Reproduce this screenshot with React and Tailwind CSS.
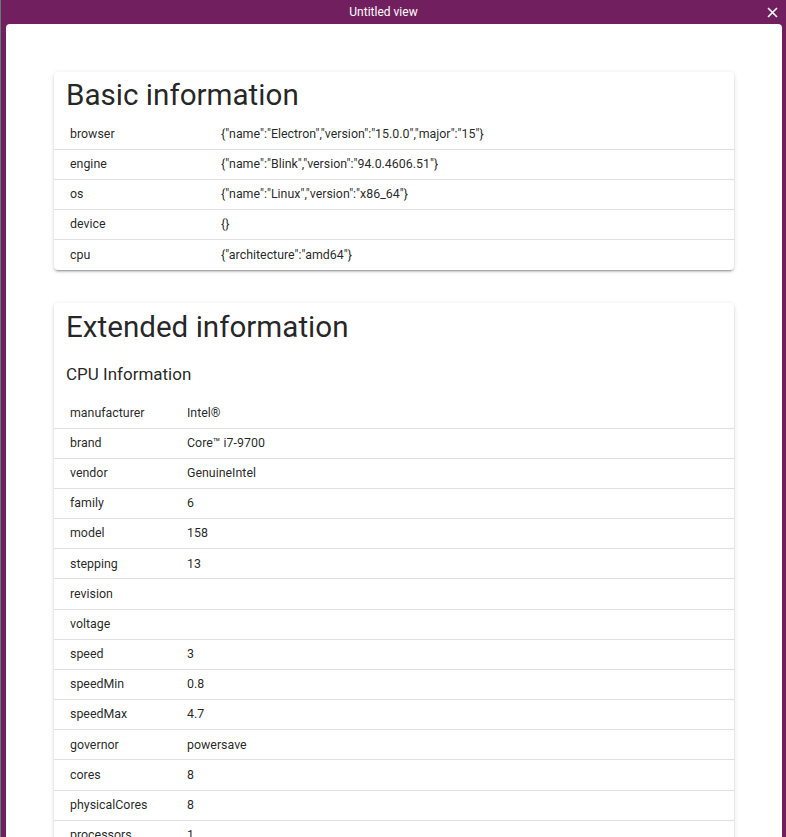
import React from 'react';

const basicInfo = [
  ['browser', '{"name":"Electron","version":"15.0.0","major":"15"}'],
  ['engine', '{"name":"Blink","version":"94.0.4606.51"}'],
  ['os', '{"name":"Linux","version":"x86_64"}'],
  ['device', '{}'],
  ['cpu', '{"architecture":"amd64"}'],
];

const cpuInfo = [
  ['manufacturer', 'Intel®'],
  ['brand', 'Core™ i7-9700'],
  ['vendor', 'GenuineIntel'],
  ['family', '6'],
  ['model', '158'],
  ['stepping', '13'],
  ['revision', ''],
  ['voltage', ''],
  ['speed', '3'],
  ['speedMin', '0.8'],
  ['speedMax', '4.7'],
  ['governor', 'powersave'],
  ['cores', '8'],
  ['physicalCores', '8'],
  ['processors', '1'],
  ['socket', ''],
  ['flags', 'fpu vme de pse tsc msr pae mce cx8'],
];

const InfoTable = ({ rows, labelWidth }) => (
  <div className="flex flex-col">
    {rows.map(([key, value], i) => (
      <div
        key={key}
        className={`flex items-center h-[30.18px] text-[12.4px] text-[rgba(0,0,0,0.87)] ${i < rows.length - 1 ? 'border-b border-[#e0e0e0]' : ''}`}
      >
        <div className={`${labelWidth} shrink-0 pl-4`}>{key}</div>
        <div className="flex-1 whitespace-nowrap">{value}</div>
      </div>
    ))}
  </div>
);

const Card = ({ children }) => (
  <div className="bg-white rounded-[4px] shadow-[0_3px_1px_-2px_rgba(0,0,0,0.2),0_2px_2px_0_rgba(0,0,0,0.14),0_1px_5px_0_rgba(0,0,0,0.12)]">
    {children}
  </div>
);

export default function App() {
  return (
    <div
      className="h-[837px] w-[786px] overflow-hidden flex flex-col bg-[#721f5f] border-l border-[#5d7f7c]"
      style={{ fontFamily: 'Roboto, "Noto Sans", sans-serif' }}
    >
      <div className="relative h-6 shrink-0 flex items-center justify-center pr-5 text-white text-[12px]">
        <span>Untitled view</span>
        <svg className="absolute right-[8px] top-[7px]" width="11" height="11" viewBox="0 0 11 11" fill="none" stroke="white" strokeWidth="1.6">
          <path d="M1 1 L10 10 M10 1 L1 10" />
        </svg>
      </div>

      <div className="flex-1 ml-[5px] mr-1 bg-white rounded-t-[4px] overflow-hidden pt-12 pl-12 pr-12">
        <Card>
          <h1 className="pt-[5px] pl-3 text-[29.6px] leading-9 text-[rgba(0,0,0,0.87)] mb-[6.5px]">Basic information</h1>
          <InfoTable rows={basicInfo} labelWidth="w-[167px]" />
        </Card>

        <div className="h-[33px]" />

        <Card>
          <h1 className="pt-[6px] pl-3 text-[29.6px] leading-9 text-[rgba(0,0,0,0.87)]">Extended information</h1>
          <h2 className="mt-[17px] pl-3 text-[17px] leading-6 text-[rgba(0,0,0,0.87)] mb-[12px]">CPU Information</h2>
          <InfoTable rows={cpuInfo} labelWidth="w-[133px]" />
        </Card>
      </div>
    </div>
  );
}
